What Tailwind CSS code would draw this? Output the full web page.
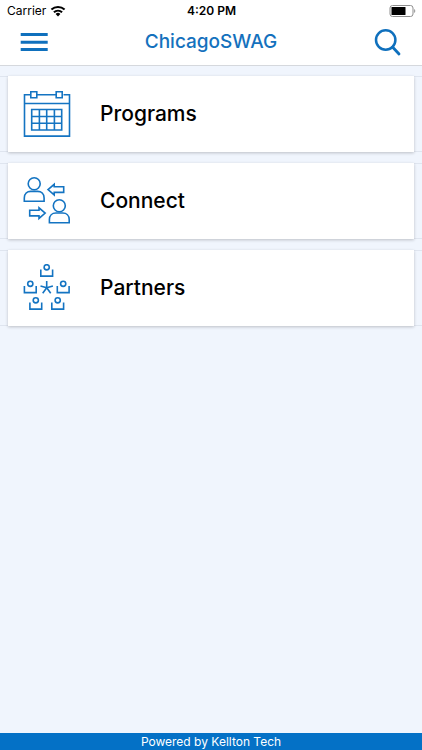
<!DOCTYPE html>
<html lang="en">

<head>
    <meta charset="UTF-8">
    <meta name="viewport" content="width=device-width, initial-scale=1.0">
    <title>ChicagoSWAG</title>
    <script src="https://cdn.jsdelivr.net/npm/@tailwindcss/browser@4"></script>
</head>

<body class="min-h-screen flex flex-col bg-[#f0f5fd] font-['Inter',sans-serif] text-black">
    <header class="bg-white border-b border-[#d5d8dd]">
        <!-- Status bar -->
        <div class="grid grid-cols-3 items-center h-[22px] pl-[7px] pr-[6px] text-xs">
            <div class="flex items-center gap-1">
                <span>Carrier</span>
                <svg class="w-4 h-3" viewBox="0 0 16 12" fill="none" stroke="#000" stroke-width="2">
                    <path d="M1.4 4.6a9.6 9.6 0 0 1 13.2 0M3.9 7.3a6 6 0 0 1 8.2 0" />
                    <path d="M8 11.4 5.6 9a3.5 3.5 0 0 1 4.8 0z" fill="#000" stroke="none" />
                </svg>
            </div>
            <span class="text-center font-semibold">4:20 PM</span>
            <svg class="justify-self-end w-[27px] h-3" viewBox="0 0 27 12">
                <rect x="1" y=".5" width="23" height="11" rx="2.5" fill="#fff" stroke="#8e8e8e" />
                <rect x="2.5" y="2" width="14" height="8" rx=".5" fill="#000" />
                <path d="M25.2 4v4c1.4-.6 1.4-3.4 0-4z" fill="#8e8e8e" />
            </svg>
        </div>
        <div class="flex items-center justify-between h-[43px] px-5 pb-[3px]">
            <button type="button" aria-label="Menu" class="text-[#0f70bd]">
                <svg class="w-7 h-[18px]" viewBox="0 0 28 18" fill="currentColor">
                    <path d="M.7 0h27v3H.7zM.7 7.700h27v3H.7zM.7 15h27v3H.7z" />
                </svg>
            </button>
            <h1 class="text-[19px] font-medium text-[#1471bd]">ChicagoSWAG</h1>
            <button type="button" aria-label="Search" class="text-[#0f70bd]">
                <svg class="w-7 h-7" viewBox="0 0 28 28" fill="none" stroke="currentColor" stroke-width="2.5">
                    <circle cx="11.7" cy="12" r="9.700" />
                    <path d="m18.500 19 6.500 7" stroke-width="2.800" stroke-linecap="round" />
                </svg>
            </button>
        </div>
    </header>

    <main class="flex-grow pt-[10px]">
        <ul class="space-y-[11px]">
            <li class="px-2 shadow-[inset_0_1px_#dfe5ef,inset_0_-1px_#dfe5ef]">
                <a href="#programs" class="flex items-center h-[76px] px-[15px] bg-white shadow-[0_1px_3px_rgba(0,0,0,0.22)]">
                    <svg class="w-12 h-12 mr-[29px]" viewBox="0 0 48 48" fill="none" stroke="#1474c2" stroke-width="1.6">
                        <path d="M7.500 4.800h-6v41.300h45V4.800h-6M14 4.800h19M1.500 13.500h45" />
                        <path d="M7.800 1.800h6v6h-6zM33.200 1.800h6v6h-6z" />
                        <path d="M8.700 19.500h30v20.500h-30zM8.700 26.500h30M8.700 33.200h30M16.400 19.500V40M23.700 19.500V40M31.400 19.500V40" />
                    </svg>
                    <span class="text-[21px] font-medium">Programs</span>
                </a>
            </li>
            <li class="px-2 shadow-[inset_0_1px_#dfe5ef,inset_0_-1px_#dfe5ef]">
                <a href="#connect" class="flex items-center h-[76px] px-[15px] bg-white shadow-[0_1px_3px_rgba(0,0,0,0.22)]">
                    <svg class="w-12 h-12 mr-[29px]" viewBox="0 0 48 48" fill="none" stroke="#1474c2" stroke-width="1.6">
                        <circle cx="11.200" cy="6.800" r="6" />
                        <path d="M1.300 24.200V21c0-4.200 2.800-6.600 6.400-6.600h7c3.600 0 6.400 2.400 6.400 6.600v3.200z" />
                        <circle cx="36.300" cy="28.800" r="6" />
                        <path d="M26.400 45.800v-3.200c0-4.200 2.800-6.600 6.400-6.600h7c3.600 0 6.400 2.400 6.400 6.600v3.200z" />
                        <path d="M25 12.600l6.200-5.300v2.500h9.500v5.600h-9.500v2.500z" />
                        <path d="M22.200 36.100L16 30.800v2.500H6.700v5.600H16v2.500z" />
                    </svg>
                    <span class="text-[21px] font-medium">Connect</span>
                </a>
            </li>
            <li class="px-2 shadow-[inset_0_1px_#dfe5ef,inset_0_-1px_#dfe5ef]">
                <a href="#partners" class="flex items-center h-[76px] px-[15px] bg-white shadow-[0_1px_3px_rgba(0,0,0,0.22)]">
                    <svg class="w-12 h-12 mr-[29px]" viewBox="0 0 48 48" fill="none" stroke="#1474c2" stroke-width="1.6">
                        <defs>
                            <g id="person">
                                <circle cx="6.500" cy="3.300" r="2.600" />
                                <path d="M.6 5.600v6.500h11.800V5.600" />
                            </g>
                        </defs>
                        <use href="#person" x="17.200" y="0" />
                        <use href="#person" x="0.800" y="16.500" />
                        <use href="#person" x="33.700" y="16.500" />
                        <use href="#person" x="6.300" y="33" />
                        <use href="#person" x="28.200" y="33" />
                        <path d="M23.700 23.700V17M23.700 23.700l-6.200-1.800M23.700 23.700l6.200-1.800M23.700 23.700l-4 5.600M23.700 23.700l4 5.600" />
                    </svg>
                    <span class="text-[21px] font-medium">Partners</span>
                </a>
            </li>
        </ul>
    </main>

    <footer class="bg-[#0471c6] h-[17px] text-center text-xs leading-[17px] text-white">Powered by Kellton Tech</footer>
</body>

</html>
